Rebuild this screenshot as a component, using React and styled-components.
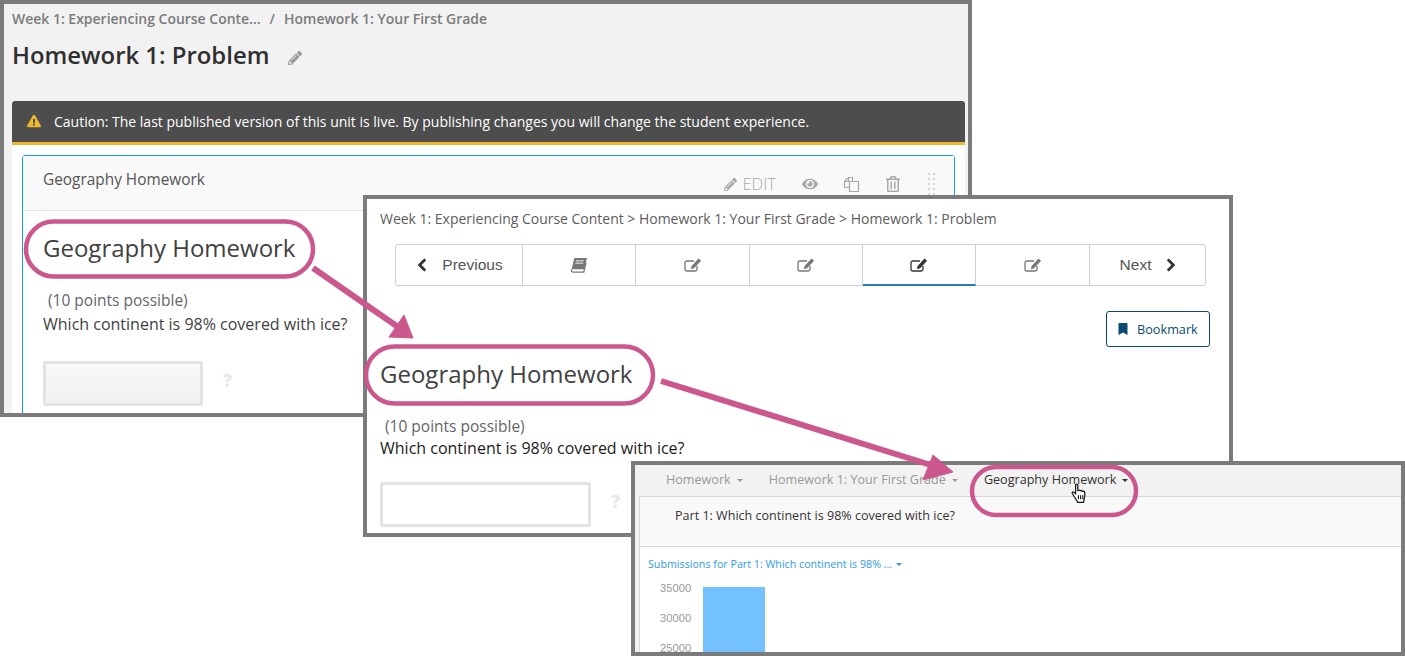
import React from 'react'
import styled, { createGlobalStyle } from 'styled-components'
import {
  FaPencilAlt, FaEye, FaRegTrashAlt, FaExclamationTriangle,
  FaBookmark, FaChevronLeft, FaChevronRight,
} from 'react-icons/fa'

const GlobalStyle = createGlobalStyle`
  html, body { margin: 0; padding: 0; background: #fff; }
  * { box-sizing: border-box; }
  body { font-family: "Open Sans", "Noto Sans", sans-serif; color: #414141; }
`

const Canvas = styled.div`
  position: relative;
  width: 1405px;
  height: 656px;
  overflow: hidden;
`

const Shot = styled.section`
  position: absolute;
  left: ${p => p.$x}px;
  top: ${p => p.$y}px;
  width: ${p => p.$w}px;
  height: ${p => p.$h}px;
  border: 4px solid #7b7b7b;
  background: ${p => p.$bg || '#fff'};
  overflow: hidden;
`

/* studio window */
const StudioCrumbs = styled.div`
  display: flex;
  gap: 9px;
  padding: 6px 0 0 8px;
  height: 28px;
  font-size: 13.98px;
  line-height: 17px;
  font-weight: 600;
  color: #7b7b7b;
`

const TitleRow = styled.div`
  display: flex;
  align-items: center;
  gap: 19px;
  padding-left: 8px;
  height: 46px;
  margin-bottom: 23px;
  svg { color: #999; font-size: 14px; margin-top: 5px; }
`

const PageTitle = styled.h1`
  margin: 0;
  font-size: 23.9px;
  line-height: 46px;
  font-weight: 600;
  color: #2f2f2f;
`

const Sheet = styled.div`
  margin-left: 8px;
  width: 953px;
  height: 320px;
  background: #fff;
`

const Banner = styled.div`
  display: flex;
  align-items: center;
  gap: 13px;
  height: 44px;
  padding: 0 0 1px 15px;
  background: #4d4d4d;
  border-bottom: 3px solid #efb72b;
  border-radius: 3px 3px 0 0;
  color: #fff;
  font-size: 14px;
  svg { color: #efb72b; font-size: 14px; }
`

const Card = styled.div`
  margin: 10px 10px 0;
  height: 300px;
  border: 1px solid #129fe6;
  border-radius: 3px 3px 0 0;
`

const CardHead = styled.div`
  display: flex;
  justify-content: space-between;
  height: 55px;
  padding: 15px 0 0 20px;
  background: #f9f9f9;
  border-bottom: 1px solid #e4e4e4;
  font-size: 15.4px;
  line-height: 18px;
  color: #555;
`

const CardTools = styled.div`
  display: flex;
  align-items: flex-start;
  padding-top: 4px;
  color: #a9a9a9;
  svg { font-size: 16px; }
`

const EditTool = styled.span`
  display: flex;
  align-items: center;
  gap: 5px;
  margin-right: 26px;
  font-size: 16.5px;
  font-weight: 300;
  line-height: 18px;
  svg { font-size: 13px; }
`

const Tool = styled.span`
  display: flex;
  margin-right: ${p => p.$gap}px;
  margin-top: 1px;
`

const Grip = styled.span`
  display: grid;
  grid-template-columns: 2px 2px;
  gap: 3px 3px;
  margin: -2px 19px 0 0;
  i { width: 2px; height: 2px; background: #d4d4d4; display: block; }
`

const CardBody = styled.div`
  padding: 20px 0 0 20px;
`

const Heading = styled.h2`
  margin: 0 0 23px;
  font-size: 24px;
  line-height: 34px;
  font-weight: 400;
  color: #414141;
`

const Points = styled.div`
  padding-left: 5px;
  font-size: 15.5px;
  line-height: 24px;
  color: #666;
`

const Question = styled.p`
  margin: ${p => p.$dark ? '-2px 0 22px' : '0 0 25px'};
  font-size: 16px;
  line-height: 24px;
  color: ${p => p.$dark ? '#1c1c1c' : '#414141'};
`

const AnswerRow = styled.div`
  display: flex;
  align-items: center;
`

const Answer = styled.div`
  width: ${p => p.$w}px;
  height: 45px;
  border: 3px solid #e3e3e3;
  border-radius: 3px;
  background: ${p => p.$plain ? '#fff' : 'linear-gradient(#f8f8f8, #f1f1f1)'};
`

const Hint = styled.span`
  margin: -8px 0 0 ${p => p.$gap}px;
  font-size: 18px;
  font-weight: 800;
  color: #e8e8e8;
`

/* lms window */
const LmsCrumbs = styled.div`
  padding: 11px 0 0 13px;
  height: 45px;
  font-size: 13.98px;
  line-height: 18px;
  color: #5c5c5c;
`

const SeqNav = styled.nav`
  display: flex;
  margin-left: 28px;
  width: 811px;
  height: 42px;
  border: 1px solid #cfcfcf;
  border-radius: 3px;
  font-family: "Liberation Sans", Arial, sans-serif;
  font-size: 15.5px;
  color: #555;
`

const SeqItem = styled.div`
  display: flex;
  align-items: center;
  justify-content: center;
  gap: 13px;
  width: ${p => p.$w}px;
  padding-left: ${p => p.$last ? '3px' : '0'};
  border-right: ${p => p.$last ? 'none' : '1px solid #cfcfcf'};
  border-bottom: ${p => p.$active ? '2px solid #2a7ab8' : 'none'};
  margin-bottom: ${p => p.$active ? '-1px' : '0'};
  color: ${p => p.$active ? '#333' : '#777'};
`

const SeqLabel = styled.span`
  color: #555;
`

const SeqArrow = styled.span`
  display: flex;
  color: #333;
  svg { font-size: 14px; stroke: currentColor; stroke-width: 30; }
`

const BookmarkRow = styled.div`
  display: flex;
  justify-content: flex-end;
  padding: 25px 19px 0 0;
`

const BookmarkBtn = styled.button`
  display: flex;
  align-items: center;
  gap: 8px;
  width: 104px;
  height: 36px;
  padding: 0 0 0 10px;
  background: #fff;
  border: 1px solid #0a4a6e;
  border-radius: 3px;
  font: 12.7px "Open Sans", sans-serif;
  color: #0a4a6e;
  svg { font-size: 12px; }
`

const LmsBody = styled.div`
  padding: 10px 0 0 13px;
`

/* insights window */
const TabBar = styled.div`
  display: flex;
  height: 31px;
  padding: 6px 0 0 31px;
  background: #f2f2f2;
  font-size: 12.6px;
  line-height: 17px;
`

const Tab = styled.span`
  position: relative;
  display: flex;
  align-items: flex-start;
  gap: 6px;
  margin-right: ${p => p.$gap}px;
  color: ${p => p.$on ? '#333' : '#999'};
  &::after {
    content: '';
    margin-top: 8px;
    border: 3px solid transparent;
    border-top-color: ${p => p.$on ? '#333' : '#999'};
    border-bottom: none;
  }
`

const Pointer = styled.span`
  position: absolute;
  left: 87px;
  top: 12px;
  display: flex;
`

const Panel = styled.div`
  margin-left: 4px;
  height: 161px;
  overflow: hidden;
  border-top: 1px solid #d8d8d8;
  border-left: 1px solid #d8d8d8;
  background: #fff;
`

const PanelHead = styled.div`
  height: 50px;
  padding: 10px 0 0 35px;
  background: #f9f9f9;
  border-bottom: 1px solid #d8d8d8;
  font-size: 12.55px;
  line-height: 17px;
  color: #333;
`

const Picker = styled.div`
  display: flex;
  align-items: center;
  gap: 4px;
  padding: 4px 0 0 8px;
  height: 31px;
  font-size: 10.7px;
  line-height: 15px;
  color: #2f9be8;
  &::after {
    content: '';
    border: 3px solid transparent;
    border-top-color: #2f9be8;
    border-bottom: none;
  }
`

const Chart = styled.div`
  display: flex;
  gap: 12px;
  padding: 3px 0 0 20px;
`

const Axis = styled.div`
  display: flex;
  flex-direction: column;
  gap: 16px;
  font-family: "Liberation Sans", Arial, sans-serif;
  font-size: 11.2px;
  line-height: 14px;
  color: #999;
`

const Bar = styled.div`
  width: 62px;
  height: 80px;
  margin-top: 6px;
  background: #73c2ff;
`

/* callouts drawn over the screenshots */
const Callouts = styled.svg`
  position: absolute;
  inset: 0;
  pointer-events: none;
`

const PINK = '#cb578c'

const Ring = ({ x, y, w, h }) => (
  <rect x={x} y={y} width={w} height={h} rx={h / 2} ry={h / 2} fill="none" stroke={PINK} strokeWidth="4.5" />
)

const BookIcon = () => (
  <svg width="18" height="16" viewBox="0 0 17 15">
    <path d="M4 1h12l-2.6 10.5H1.600z" fill="currentColor" />
    <path d="M1.600 11.500c-1 1.600 0 2.700 1.200 2.700h10.200l2.200-9" fill="none" stroke="currentColor" strokeWidth="1.200" />
    <path d="M5.600 3.600h7.400M5.100 5.800h7.400" stroke="#fff" strokeWidth="0.800" />
  </svg>
)

const EditIcon = () => (
  <svg width="18" height="14" viewBox="0 0 18 14">
    <path d="M13 8v3.200c0 1-.7 1.800-1.800 1.800H2.800C1.700 13 1 12.200 1 11.200V4.800C1 3.700 1.700 3 2.800 3H10" fill="none" stroke="currentColor" strokeWidth="1.300" />
    <path d="M14.500 .6l2.600 2.100-7 7.500-3.300 1 .8-3.200z" fill="currentColor" />
  </svg>
)

const CloneIcon = () => (
  <svg width="17" height="17" viewBox="0 0 17 17" fill="none" stroke="currentColor" strokeWidth="1.200" strokeLinejoin="round">
    <path d="M6.500 11.500H1.500V5.500L5.500 1.500H9.500V5" />
    <path d="M6.500 5.500H15.500V15.500H6.500z" fill="#f9f9f9" />
    <path d="M5.500 1.500V5.500H1.500" />
  </svg>
)

const HandIcon = () => (
  <svg width="17" height="21" viewBox="0 0 15 19">
    <path
      d="M4 1.500c.8-.8 1.900-.4 2 .7V7l1-.4c.6-.2 1.200 0 1.500.5.6-.4 1.500-.2 1.800.5.7-.4 1.700 0 1.900.9.300 1.800.1 4.500-.6 6.500l-.4 2.500H6L2.500 12 .9 9.300c-.3-.9.700-1.600 1.500-1L4 9.800V2.400z"
      fill="#fff" stroke="#111" strokeWidth="1.100" strokeLinejoin="round"
    />
    <path d="M6.500 11v3.800M8.500 11v3.800M10.500 11v3.800" stroke="#111" strokeWidth="1" />
  </svg>
)

const App = () => {
  return (
    <Canvas>
      <GlobalStyle />

      <Shot $x={0} $y={0} $w={972} $h={417} $bg="#f2f2f2">
        <StudioCrumbs>
          <span>Week 1: Experiencing Course Conte...</span>
          <span>/</span>
          <span>Homework 1: Your First Grade</span>
        </StudioCrumbs>
        <TitleRow>
          <PageTitle>Homework 1: Problem</PageTitle>
          <FaPencilAlt />
        </TitleRow>
        <Sheet>
          <Banner>
            <FaExclamationTriangle />
            Caution: The last published version of this unit is live. By publishing changes you will change the student experience.
          </Banner>
          <Card>
            <CardHead>
              Geography Homework
              <CardTools>
                <EditTool><FaPencilAlt />EDIT</EditTool>
                <Tool $gap={25}><FaEye /></Tool>
                <Tool $gap={25}><CloneIcon /></Tool>
                <Tool $gap={27}><FaRegTrashAlt /></Tool>
                <Grip>{Array.from({ length: 10 }, (_, i) => <i key={i} />)}</Grip>
              </CardTools>
            </CardHead>
            <CardBody>
              <Heading>Geography Homework</Heading>
              <Points>(10 points possible)</Points>
              <Question>Which continent is 98% covered with ice?</Question>
              <AnswerRow>
                <Answer $w={160} />
                <Hint $gap={20}>?</Hint>
              </AnswerRow>
            </CardBody>
          </Card>
        </Sheet>
      </Shot>

      <Shot $x={363} $y={195} $w={870} $h={342}>
        <LmsCrumbs>Week 1: Experiencing Course Content &gt; Homework 1: Your First Grade &gt; Homework 1: Problem</LmsCrumbs>
        <SeqNav>
          <SeqItem $w={127}>
            <SeqArrow><FaChevronLeft /></SeqArrow>
            <SeqLabel>Previous</SeqLabel>
          </SeqItem>
          <SeqItem $w={113}><BookIcon /></SeqItem>
          <SeqItem $w={114}><EditIcon /></SeqItem>
          <SeqItem $w={113}><EditIcon /></SeqItem>
          <SeqItem $w={113} $active><EditIcon /></SeqItem>
          <SeqItem $w={114}><EditIcon /></SeqItem>
          <SeqItem $w={115} $last>
            <SeqLabel>Next</SeqLabel>
            <SeqArrow><FaChevronRight /></SeqArrow>
          </SeqItem>
        </SeqNav>
        <BookmarkRow>
          <BookmarkBtn><FaBookmark />Bookmark</BookmarkBtn>
        </BookmarkRow>
        <LmsBody>
          <Heading>Geography Homework</Heading>
          <Points>(10 points possible)</Points>
          <Question $dark>Which continent is 98% covered with ice?</Question>
          <AnswerRow>
            <Answer $w={211} $plain />
            <Hint $gap={20}>?</Hint>
          </AnswerRow>
        </LmsBody>
      </Shot>

      <Shot $x={631} $y={461} $w={774} $h={195} $bg="#f2f2f2">
        <TabBar>
          <Tab $gap={26}>Homework</Tab>
          <Tab $gap={26}>Homework 1: Your First Grade</Tab>
          <Tab $on $gap={0}>
            Geography Homework
            <Pointer><HandIcon /></Pointer>
          </Tab>
        </TabBar>
        <Panel>
          <PanelHead>Part 1: Which continent is 98% covered with ice?</PanelHead>
          <Picker>Submissions for Part 1: Which continent is 98% ...</Picker>
          <Chart>
            <Axis>
              <span>35000</span>
              <span>30000</span>
              <span>25000</span>
            </Axis>
            <Bar />
          </Chart>
        </Panel>
      </Shot>

      <Callouts width="1405" height="656" viewBox="0 0 1405 656">
        <Ring x={26} y={221.5} w={287} h={55} />
        <Ring x={366} y={346.5} w={287} h={57} />
        <Ring x={972} y={467} w={164} h={48} />
        <g fill={PINK} stroke={PINK}>
          <line x1="313" y1="268" x2="398" y2="327" strokeWidth="6" />
          <polygon points="413,338 389,337 404,315" strokeWidth="1" />
          <line x1="661" y1="381" x2="934" y2="466" strokeWidth="6" />
          <polygon points="953,472 923,480 933,455" strokeWidth="1" />
        </g>
      </Callouts>
    </Canvas>
  )
}

export default App
